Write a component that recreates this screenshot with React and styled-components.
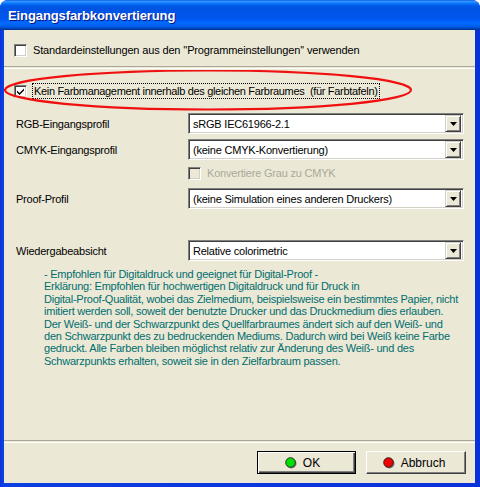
import React from 'react';
import styled, { createGlobalStyle } from 'styled-components';

const Global = createGlobalStyle`
  html, body { margin: 0; padding: 0; background: #fff; }
  body { font-family: 'Liberation Sans', Arial, sans-serif; font-size: 11px; }
`;

const Window = styled.div`
  width: 480px;
  height: 487px;
  display: flex;
  flex-direction: column;
  background: linear-gradient(to right, #0831d9 0, #0b3fe0 2px, #0831d9 100%);
  border-radius: 8px 8px 0 0;
  overflow: hidden;
  box-sizing: border-box;
`;

const TitleBar = styled.div`
  height: 30px;
  flex: none;
  display: flex;
  align-items: center;
  padding-left: 8px;
  padding-top: 1px;
  box-sizing: border-box;
  background: linear-gradient(to bottom,
    #0058ee 0%, #3a93ff 4%, #288eff 7%, #127dff 10%, #036ffc 13%,
    #0262ee 17%, #0057e5 22%, #0054e3 28%, #0055eb 56%, #005bf5 66%,
    #026afe 76%, #0062ef 86%, #0052d6 92%, #0040ab 96%, #003092 100%);
  color: #fff;
  font-weight: bold;
  font-size: 13px;
  letter-spacing: -0.1px;
  text-shadow: 1px 1px #0a1883;
`;

const Body = styled.div`
  position: relative;
  flex: 1;
  margin: 0 5px 4px 4px;
  background: #ebe8d6;
  display: flex;
  flex-direction: column;
  color: #000;
`;

const CheckRow = styled.label`
  display: flex;
  align-items: center;
  gap: 6px;
  height: 14px;
  margin-top: ${p => p.$mt}px;
  padding-left: ${p => p.$pl}px;
  color: ${p => (p.$disabled ? '#aca899' : '#000')};
  letter-spacing: ${p => p.$ls || 0}px;
  white-space: pre;
`;

const Box = styled.span`
  width: 13px;
  height: 13px;
  box-sizing: border-box;
  flex: none;
  background: ${p => (p.$disabled ? '#ebe8d6' : '#fff')};
  border-top: 1px solid #808080;
  border-left: 1px solid #808080;
  border-right: 1px solid #fff;
  border-bottom: 1px solid #fff;
  box-shadow: inset 1px 1px #404040, inset -1px -1px #d4d0c8;
  display: flex;
  align-items: center;
  justify-content: center;
`;

const Focus = styled.span`
  outline: 1px dotted #000;
  outline-offset: 0;
  padding: 0 1px;
  line-height: 14px;
`;

const Separator = styled.div`
  height: 1px;
  border-top: 1px solid #aca899;
  border-bottom: 1px solid #fff;
  margin-top: ${p => p.$mt}px;
`;

const Field = styled.div`
  display: flex;
  align-items: center;
  margin-top: ${p => p.$mt}px;
  padding: 0 11px 0 12px;
  height: 21px;
  letter-spacing: -0.22px;
`;

const Label = styled.div`
  width: 172px;
  flex: none;
`;

const Select = styled.div`
  flex: 1;
  height: 21px;
  box-sizing: border-box;
  background: #fff;
  border-top: 1px solid #808080;
  border-left: 1px solid #808080;
  border-right: 1px solid #fff;
  border-bottom: 1px solid #fff;
  box-shadow: inset 1px 1px #404040, inset -1px -1px #d4d0c8;
  display: flex;
  align-items: center;
  padding: 2px 2px 2px 4px;
`;

const SelectText = styled.span`
  flex: 1;
  white-space: nowrap;
`;

const DropButton = styled.span`
  width: 16px;
  height: 17px;
  box-sizing: border-box;
  background: #ebe8d6;
  border-top: 1px solid #d4d0c8;
  border-left: 1px solid #d4d0c8;
  border-right: 1px solid #404040;
  border-bottom: 1px solid #404040;
  box-shadow: inset 1px 1px #fff, inset -1px -1px #808080;
  display: flex;
  align-items: center;
  justify-content: center;
`;

const Description = styled.div`
  margin-top: 7px;
  padding-left: 40px;
  color: #006e6e;
  line-height: 12.4px;
  letter-spacing: -0.24px;
  white-space: nowrap;
`;

const Spacer = styled.div`
  flex: 1;
`;

const Footer = styled.div`
  display: flex;
  justify-content: flex-end;
  gap: 10px;
  padding: 8px 9px 9px 0;
`;

const Button = styled.div`
  width: ${p => p.$w}px;
  height: 23px;
  box-sizing: border-box;
  display: flex;
  align-items: center;
  justify-content: center;
  gap: 6px;
  font-size: 12px;
  background: #ebe8d6;
  border: 1px solid ${p => (p.$default ? '#000' : '#fff')};
  border-right-color: ${p => (p.$default ? '#000' : '#404040')};
  border-bottom-color: ${p => (p.$default ? '#000' : '#404040')};
  box-shadow: ${p =>
    p.$default
      ? 'inset 1px 1px #fff, inset -1px -1px #404040, inset -2px -2px #808080'
      : 'inset -1px -1px #808080'};
  padding-right: ${p => p.$pr}px;
`;

const Annotation = styled.svg`
  position: absolute;
  left: 0;
  top: 40px;
  pointer-events: none;
`;

const Check = () => (
  <svg width="9" height="9" viewBox="0 0 9 9">
    <path d="M1 3.5 L3.5 6 L8 1.5 L8 3.5 L3.5 8 L1 5.5 Z" fill="#000" />
  </svg>
);

const Arrow = () => (
  <svg width="7" height="4" viewBox="0 0 7 4">
    <path d="M0 0 H7 L3.5 4 Z" fill="#000" />
  </svg>
);

const Dot = ({ color }) => (
  <svg width="12" height="12" viewBox="0 0 12 12">
    <circle cx="6.5" cy="6.5" r="5" fill="#808080" />
    <circle cx="5.5" cy="5.5" r="4.8" fill={color} stroke="#202020" strokeWidth="0.9" />
  </svg>
);

const lines = [
  '- Empfohlen für Digitaldruck und geeignet für Digital-Proof -',
  'Erklärung: Empfohlen für hochwertigen Digitaldruck und für Druck in',
  'Digital-Proof-Qualität, wobei das Zielmedium, beispielsweise ein bestimmtes Papier, nicht',
  'imitiert werden soll, soweit der benutzte Drucker und das Druckmedium dies erlauben.',
  'Der Weiß- und der Schwarzpunkt des Quellfarbraumes ändert sich auf den Weiß- und',
  'den Schwarzpunkt des zu bedruckenden Mediums. Dadurch wird bei Weiß keine Farbe',
  'gedruckt. Alle Farben bleiben möglichst relativ zur Änderung des Weiß- und des',
  'Schwarzpunkts erhalten, soweit sie in den Zielfarbraum passen.',
];

function Combo({ label, value, mt }) {
  return (
    <Field $mt={mt}>
      <Label>{label}</Label>
      <Select>
        <SelectText>{value}</SelectText>
        <DropButton><Arrow /></DropButton>
      </Select>
    </Field>
  );
}

export default function App() {
  return (
    <>
      <Global />
      <Window>
        <TitleBar>Eingangsfarbkonvertierung</TitleBar>
        <Body>
          <CheckRow $mt={13} $pl={10} $ls={-0.15}>
            <Box />
            <span>Standardeinstellungen aus den ''Programmeinstellungen'' verwenden</span>
          </CheckRow>
          <Separator $mt={9} />
          <CheckRow $mt={15} $pl={10} $ls={-0.32}>
            <Box><Check /></Box>
            <Focus>Kein Farbmanagement innerhalb des gleichen Farbraumes  (für Farbtafeln)</Focus>
          </CheckRow>
          <Combo mt={15} label="RGB-Eingangsprofil" value="sRGB IEC61966-2.1" />
          <Combo mt={5} label="CMYK-Eingangsprofil" value="(keine CMYK-Konvertierung)" />
          <CheckRow $mt={6} $pl={184} $disabled $ls={-0.2}>
            <Box $disabled />
            <span>Konvertiere Grau zu CMYK</span>
          </CheckRow>
          <Combo mt={8} label="Proof-Profil" value="(keine Simulation eines anderen Druckers)" />
          <Combo mt={31} label="Wiedergabeabsicht" value="Relative colorimetric" />
          <Description>
            {lines.map(l => <div key={l}>{l}</div>)}
          </Description>
          <Spacer />
          <Separator $mt={0} />
          <Footer>
            <Button $w={99} $default $pr={8}><Dot color="#00e000" />OK</Button>
            <Button $w={100} $pr={4}><Dot color="#f00000" />Abbruch</Button>
          </Footer>
          <Annotation width="412" height="44" viewBox="0 0 412 44">
            <ellipse cx="204" cy="20" rx="203" ry="19.5" fill="none" stroke="#f01010" strokeWidth="2.2" />
          </Annotation>
        </Body>
      </Window>
    </>
  );
}
